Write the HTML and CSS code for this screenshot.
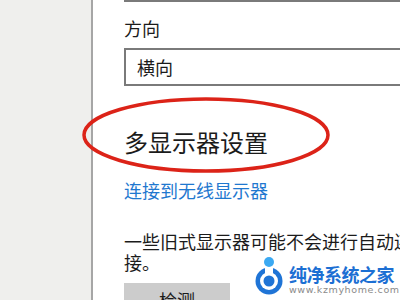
FILE: index.html
```html
<!DOCTYPE html>
<html lang="zh-CN">
<head>
<meta charset="utf-8">
<title>显示设置</title>
<link rel="stylesheet" href="styles.css">
</head>
<body>
<div class="window">
  <aside class="sidebar"></aside>
  <main class="content">
    <div class="prev-select"></div>
    <div class="label">方向</div>
    <div class="select">横向</div>
    <h2 class="heading">多显示器设置</h2>
    <a class="link" href="#">连接到无线显示器</a>
    <p class="desc">一些旧式显示器可能不会进行自动连接。</p>
    <button class="btn">检测</button>
  </main>
  <svg class="annotation" width="400" height="300" viewBox="0 0 400 300">
    <ellipse cx="206" cy="135" rx="122" ry="36" fill="none" stroke="#dc2318" stroke-width="3.5"/>
  </svg>
  <div class="watermark">
    <svg class="wm-icon" width="30" height="42" viewBox="0 0 30 42">
      <circle cx="14" cy="28" r="13.5" fill="#1f74d6"/>
      <circle cx="14" cy="28" r="9" fill="#ffffff"/>
      <rect x="10" y="13" width="8" height="8" fill="#ffffff"/>
      <circle cx="14" cy="28" r="5.5" fill="#1f74d6"/>
      <circle cx="14" cy="9" r="5" fill="#3ba9f2"/>
    </svg>
    <div class="wm-text">
      <div class="wm-title">纯净系统之家</div>
      <div class="wm-url">www.kzmyhome.com</div>
    </div>
  </div>
</div>
</body>
</html>
```
FILE: styles.css
```css
html, body {
  margin: 0;
  padding: 0;
  background: #ffffff;
  overflow: hidden;
}
.window {
  position: relative;
  width: 400px;
  height: 300px;
  display: flex;
  overflow: hidden;
  font-family: "Noto Sans CJK SC", "Microsoft YaHei", sans-serif;
  color: #1b1b1b;
}
.sidebar {
  width: 91px;
  flex: none;
  background: #efefed;
  border-right: 2px solid #a6a6a6;
}
.content {
  flex: 1;
  padding-left: 31px;
  display: flex;
  flex-direction: column;
  align-items: flex-start;
}
.prev-select {
  width: 320px;
  height: 0;
  border-top: 2px solid #7a7a7a;
  flex: none;
}
.label {
  margin-top: 17px;
  font-size: 18px;
  line-height: 18px;
}
.select {
  margin-top: 11px;
  width: 320px;
  height: 38px;
  box-sizing: border-box;
  border: 2px solid #7a7a7a;
  padding-left: 11px;
  font-size: 18px;
  line-height: 34px;
  flex: none;
}
.heading {
  margin: 44px 0 0;
  font-size: 24px;
  line-height: 24px;
  font-weight: normal;
}
.link {
  margin-top: 27px;
  font-size: 18px;
  line-height: 18px;
  color: #1f78cf;
  text-decoration: none;
}
.desc {
  margin: 32px 0 0;
  width: 300px;
  font-size: 18px;
  line-height: 21px;
  flex: none;
}
.btn {
  margin-top: 10px;
  width: 106px;
  height: 34px;
  border: none;
  padding: 8px 0 0;
  background: #cccccc;
  font-family: inherit;
  font-size: 18px;
  line-height: 18px;
  color: #1b1b1b;
  text-align: center;
  align-self: flex-start;
  box-sizing: border-box;
  display: block;
}
.annotation {
  position: absolute;
  left: 0;
  top: 0;
  pointer-events: none;
}
.watermark {
  position: absolute;
  left: 255px;
  top: 253px;
  display: flex;
  align-items: flex-start;
  gap: 4px;
}
.wm-icon {
  display: block;
}
.wm-text {
  padding-top: 11px;
  display: flex;
  flex-direction: column;
}
.wm-title {
  font-size: 18px;
  line-height: 20px;
  font-weight: bold;
  color: #1c6fd3;
  letter-spacing: -0.5px;
}
.wm-url {
  font-family: "DejaVu Sans", sans-serif;
  font-size: 9.5px;
  line-height: 11px;
  color: #8a8a8a;
  letter-spacing: 0.6px;
}
```
